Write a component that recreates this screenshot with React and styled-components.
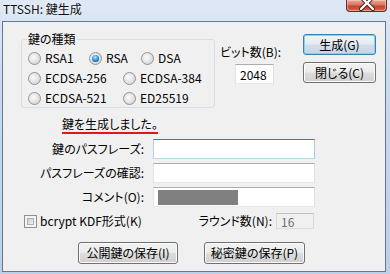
import React from "react";
import styled, { createGlobalStyle } from "styled-components";

const Global = createGlobalStyle`
  html, body { margin: 0; padding: 0; }
  body {
    font-family: "Noto Sans CJK JP", "Noto Sans", sans-serif;
    font-size: 12px;
    color: #000;
    font-feature-settings: "palt";
  }
  #root { width: 390px; height: 274px; }
`;

const Window = styled.div`
  width: 390px;
  height: 274px;
  box-sizing: border-box;
  background: linear-gradient(180deg, #dfe9f6 0%, #c9daef 30%, #bccfe9 100%);
  display: flex;
  flex-direction: column;
  padding: 0 4px 2px 2px;
  overflow: hidden;
`;

const TitleBar = styled.div`
  height: 21px;
  flex: none;
  display: flex;
  justify-content: space-between;
  align-items: flex-start;
`;

const TitleText = styled.div`
  padding: 2px 0 0 1px;
  line-height: 14px;
  font-size: 12px;
  color: #111;
  text-shadow: 0 0 6px rgba(255, 255, 255, 0.9);
`;

const CloseButton = styled.div`
  width: 41px;
  height: 12px;
  margin-right: -1px;
  box-sizing: border-box;
  border: 1px solid #6b2b24;
  border-top: none;
  border-radius: 0 0 4px 4px;
  background: linear-gradient(180deg, #e9a99b 0%, #d9755f 45%, #c7432c 55%, #d4634a 100%);
  box-shadow: inset 0 0 0 1px rgba(255, 220, 210, 0.5);
  display: flex;
  justify-content: center;
  overflow: hidden;
`;

const Client = styled.div`
  flex: 1;
  border: 1px solid #66788e;
  background: #f0f0f0;
  display: flex;
  flex-direction: column;
  min-height: 0;
`;

const Top = styled.div`
  display: flex;
  align-items: flex-start;
  padding: 0 9px 0 18px;
  height: 86px;
  flex: none;
`;

const Group = styled.fieldset`
  margin: 11px 0 0 0;
  padding: 0 0 0 6px;
  width: 194px;
  height: 75px;
  box-sizing: border-box;
  border: 1px solid #d5dfe5;
  border-radius: 3px;
  min-width: 0;
`;

const Legend = styled.legend`
  padding: 0 1px;
  margin-left: -1px;
  line-height: 12px;
  font-size: 12px;
`;

const RadioRow = styled.div`
  display: flex;
  align-items: center;
  height: 20px;
  margin-top: ${(p) => (p.$first ? "3px" : "0")};
`;

const RadioItem = styled.label`
  display: flex;
  align-items: center;
  width: ${(p) => (p.$w ? `${p.$w}px` : "auto")};
  flex: none;
  white-space: nowrap;
  line-height: 14px;
`;

const RadioCircle = styled.span`
  width: 13px;
  height: 13px;
  box-sizing: border-box;
  border-radius: 50%;
  border: 1px solid #939393;
  background: radial-gradient(circle at 40% 40%, #fbfbfb 0%, #e6e6e6 45%, #c9c9c9 100%);
  margin-right: 4px;
  display: flex;
  align-items: center;
  justify-content: center;
  flex: none;
`;

const RadioDot = styled.span`
  width: 7px;
  height: 7px;
  border-radius: 50%;
  background: radial-gradient(circle at 45% 35%, #c4ecff 0%, #4ab0ea 35%, #14589c 80%, #0d3b6e 100%);
`;

const BitsCol = styled.div`
  display: flex;
  flex-direction: column;
  margin: 23px 0 0 5px;
`;

const Label = styled.span`
  line-height: 14px;
  white-space: nowrap;
  text-align: ${(p) => (p.$right ? "right" : "left")};
`;

const TextBox = styled.div`
  box-sizing: border-box;
  width: ${(p) => p.$w}px;
  height: ${(p) => p.$h || 20}px;
  background: ${(p) => (p.$disabled ? "#f0f0f0" : "#fff")};
  border: 1px solid;
  border-color: ${(p) =>
    p.$focus
      ? "#3d7bad #a4c9e3 #b7d9ed #b5cfe7"
      : p.$disabled
      ? "#c2c2c2 #d8d8d8 #dcdcdc #d8d8d8"
      : "#abadb3 #dbdfe6 #e3e9ef #e2e3ea"};
  color: ${(p) => (p.$disabled ? "#6d6d6d" : "#000")};
  padding: ${(p) => (p.$pad ? "3px 4px" : "0")};
  line-height: 13px;
  font-size: 12px;
  display: flex;
  align-items: center;
  flex: none;
`;

const BitsBox = styled(TextBox)`
  margin: 5px 0 0 15px;
  padding-left: 4px;
`;

const ButtonCol = styled.div`
  margin: 12px 0 0 auto;
  display: flex;
  flex-direction: column;
  gap: 7px;
`;

const Button = styled.button`
  width: ${(p) => p.$w}px;
  height: ${(p) => p.$h || 21}px;
  box-sizing: border-box;
  padding: 0;
  font-family: inherit;
  font-size: 12px;
  font-feature-settings: "palt";
  color: #000;
  border-radius: 3px;
  border: 1px solid ${(p) => (p.$default ? "#3c7fb1" : "#707070")};
  background: ${(p) =>
    p.$default
      ? "linear-gradient(180deg, #eef4f9 0%, #e4ebf2 48%, #d3dee9 52%, #c8d5e2 100%)"
      : "linear-gradient(180deg, #f2f2f2 0%, #ebebeb 48%, #dddddd 52%, #cfcfcf 100%)"};
  box-shadow: ${(p) =>
    p.$default ? "inset 0 0 0 1px #7fd3f7" : "inset 0 0 0 1px #fbfbfb"};
  line-height: 14px;
  flex: none;
`;

const Status = styled.div`
  margin-top: 7px;
  padding-left: 59px;
  height: 17px;
  flex: none;
`;

const StatusText = styled.span`
  display: inline-block;
  line-height: 14px;
  padding-bottom: 1px;
  border-bottom: 2px solid #e8141b;
`;

const Form = styled.div`
  margin-top: 7px;
  display: grid;
  grid-template-columns: 141px 162px;
  grid-auto-rows: 20px;
  column-gap: 9px;
  row-gap: 4px;
  align-items: center;
  flex: none;
`;

const Redact = styled.div`
  width: 80px;
  height: 15px;
  background: #808080;
  margin-left: 4px;
`;

const CheckRow = styled.div`
  margin-top: 6px;
  height: 16px;
  display: flex;
  align-items: center;
  justify-content: space-between;
  padding: 0 71px 0 21px;
  flex: none;
`;

const CheckLabel = styled.label`
  display: flex;
  align-items: center;
  gap: 2px;
  line-height: 14px;
  white-space: nowrap;
`;

const CheckBox = styled.span`
  width: 13px;
  height: 13px;
  box-sizing: border-box;
  border: 1px solid #8e8f8f;
  background: #f4f4f4;
  padding: 2px;
  display: flex;
  flex: none;
  margin-right: 1px;
  &::after {
    content: "";
    flex: 1;
    background: linear-gradient(135deg, #cbcbcb 0%, #e4e4e4 60%, #f6f6f6 100%);
    border: 1px solid #aeb0b3;
  }
`;

const RoundGroup = styled.div`
  display: flex;
  align-items: center;
  gap: 4px;
`;

const ButtonRow = styled.div`
  margin-top: 13px;
  display: flex;
  gap: 26px;
  padding-left: 75px;
  flex: none;
`;

function Radio({ label, checked, w }) {
  return (
    <RadioItem $w={w}>
      <RadioCircle>{checked && <RadioDot />}</RadioCircle>
      {label}
    </RadioItem>
  );
}

export default function App() {
  return (
    <>
      <Global />
      <Window>
        <TitleBar>
          <TitleText>TTSSH: 鍵生成</TitleText>
          <CloseButton>
            <svg width="16" height="11" viewBox="0 0 16 11">
              <path d="M2 -3 L14 9 M14 -3 L2 9" stroke="#4a1a14" strokeWidth="4.2" strokeLinecap="round" />
              <path d="M2 -3 L14 9 M14 -3 L2 9" stroke="#ffffff" strokeWidth="2.4" strokeLinecap="round" />
            </svg>
          </CloseButton>
        </TitleBar>
        <Client>
          <Top>
            <Group>
              <Legend>鍵の種類</Legend>
              <RadioRow $first>
                <Radio label="RSA1" w={61} />
                <Radio label="RSA" w={52} checked />
                <Radio label="DSA" />
              </RadioRow>
              <RadioRow>
                <Radio label="ECDSA-256" w={95} />
                <Radio label="ECDSA-384" />
              </RadioRow>
              <RadioRow>
                <Radio label="ECDSA-521" w={95} />
                <Radio label="ED25519" />
              </RadioRow>
            </Group>
            <BitsCol>
              <Label>ビット数(B):</Label>
              <BitsBox $w={39}>2048</BitsBox>
            </BitsCol>
            <ButtonCol>
              <Button $w={73} $default>生成(G)</Button>
              <Button $w={73}>閉じる(C)</Button>
            </ButtonCol>
          </Top>
          <Status>
            <StatusText>鍵を生成しました。</StatusText>
          </Status>
          <Form>
            <Label $right>鍵のパスフレーズ:</Label>
            <TextBox $w={162} $focus />
            <Label $right>パスフレーズの確認:</Label>
            <TextBox $w={162} />
            <Label $right>コメント(O):</Label>
            <TextBox $w={162}>
              <Redact />
            </TextBox>
          </Form>
          <CheckRow>
            <CheckLabel>
              <CheckBox />
              bcrypt KDF形式(K)
            </CheckLabel>
            <RoundGroup>
              <Label>ラウンド数(N):</Label>
              <TextBox $w={38} $h={16} $disabled $pad>16</TextBox>
            </RoundGroup>
          </CheckRow>
          <ButtonRow>
            <Button $w={100} $h={22}>公開鍵の保存(I)</Button>
            <Button $w={101} $h={22}>秘密鍵の保存(P)</Button>
          </ButtonRow>
        </Client>
      </Window>
    </>
  );
}
